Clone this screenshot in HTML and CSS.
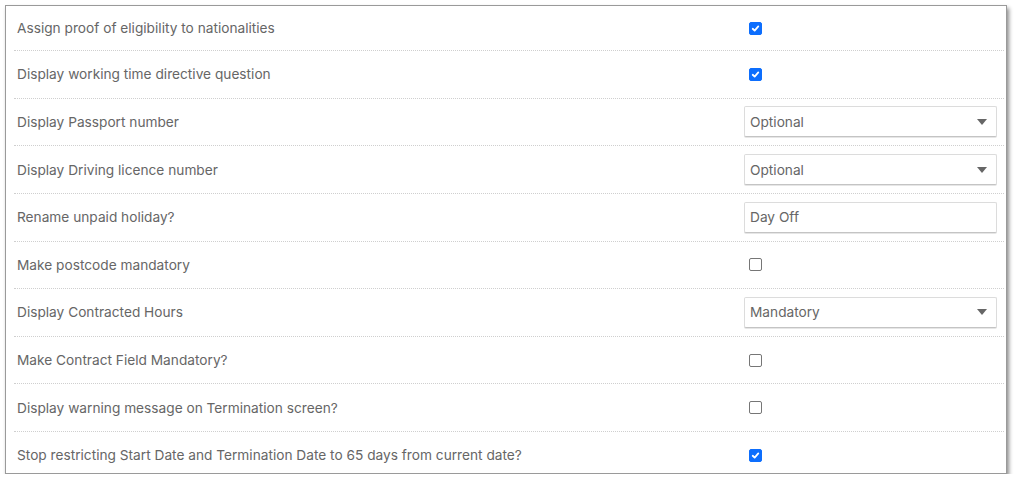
FILE: index.html
```html
<!DOCTYPE html>
<html>
<head>
<meta charset="utf-8">
<link rel="stylesheet" href="styles.css">
</head>
<body>
<div class="panel">
  <div class="row first">
    <div class="label">Assign proof of eligibility to nationalities</div>
    <div class="control"><span class="cb checked"><svg viewBox="0 0 13 13"><path d="M3.2 6.8 L5.5 9 L9.8 4" /></svg></span></div>
  </div>
  <div class="row">
    <div class="label">Display working time directive question</div>
    <div class="control"><span class="cb checked"><svg viewBox="0 0 13 13"><path d="M3.2 6.8 L5.5 9 L9.8 4" /></svg></span></div>
  </div>
  <div class="row">
    <div class="label">Display Passport number</div>
    <div class="control"><div class="select"><span>Optional</span><span class="arrow"></span></div></div>
  </div>
  <div class="row">
    <div class="label">Display Driving licence number</div>
    <div class="control"><div class="select"><span>Optional</span><span class="arrow"></span></div></div>
  </div>
  <div class="row">
    <div class="label">Rename unpaid holiday?</div>
    <div class="control"><div class="select input"><span>Day Off</span></div></div>
  </div>
  <div class="row">
    <div class="label">Make postcode mandatory</div>
    <div class="control"><span class="cb"></span></div>
  </div>
  <div class="row">
    <div class="label">Display Contracted Hours</div>
    <div class="control"><div class="select"><span>Mandatory</span><span class="arrow"></span></div></div>
  </div>
  <div class="row">
    <div class="label">Make Contract Field Mandatory?</div>
    <div class="control"><span class="cb"></span></div>
  </div>
  <div class="row">
    <div class="label">Display warning message on Termination screen?</div>
    <div class="control"><span class="cb"></span></div>
  </div>
  <div class="row last">
    <div class="label">Stop restricting Start Date and Termination Date to 65 days from current date?</div>
    <div class="control"><span class="cb checked"><svg viewBox="0 0 13 13"><path d="M3.2 6.8 L5.5 9 L9.8 4" /></svg></span></div>
  </div>
</div>
</body>
</html>
```

FILE: styles.css
```css
html, body {
  margin: 0;
  padding: 0;
  background: #fff;
}
body {
  font-family: "Inter", "Liberation Sans", sans-serif;
  font-size: 13.7px;
  color: #666;
}
.panel {
  margin: 5px 0 0 5px;
  width: 1000px;
  height: 467px;
  border: 1px solid #9a9a9a;
  box-shadow: 2px 3px 4px rgba(0, 0, 0, 0.45);
  background: #fff;
  overflow: hidden;
}
.row {
  display: grid;
  grid-template-columns: 1fr 253px;
  align-items: center;
  height: 46.625px;
  margin: 0 2px 0 8px;
  padding: 0 7px 0 3px;
  border-bottom: 1px dotted #cfcfcf;
}
.row.first {
  height: 44px;
}
.row.last {
  border-bottom: none;
}
.label {
  white-space: nowrap;
  color: #666;
}
.control {
  display: flex;
  align-items: center;
}
.cb {
  box-sizing: border-box;
  width: 13px;
  height: 13px;
  margin-left: 5px;
  border: 1px solid #767676;
  border-radius: 2px;
  background: #fff;
  display: flex;
}
.cb.checked {
  background: #0d6efd;
  border-color: #0d6efd;
}
.cb svg {
  width: 11px;
  height: 11px;
  margin: 0;
}
.cb svg path {
  fill: none;
  stroke: #fff;
  stroke-width: 2.1;
  stroke-linecap: round;
  stroke-linejoin: round;
}
.select {
  box-sizing: border-box;
  width: 253px;
  height: 31px;
  border: 1px solid #dcdcdc;
  border-bottom-color: #c4c4c4;
  border-radius: 2px;
  box-shadow: 0 1px 0 #e6e6e6;
  display: flex;
  align-items: center;
  justify-content: space-between;
  padding: 0 9px 0 5px;
  color: #666;
  background: #fff;
}
.arrow {
  width: 0;
  height: 0;
  border-left: 5px solid transparent;
  border-right: 5px solid transparent;
  border-top: 6px solid #666;
}
```
